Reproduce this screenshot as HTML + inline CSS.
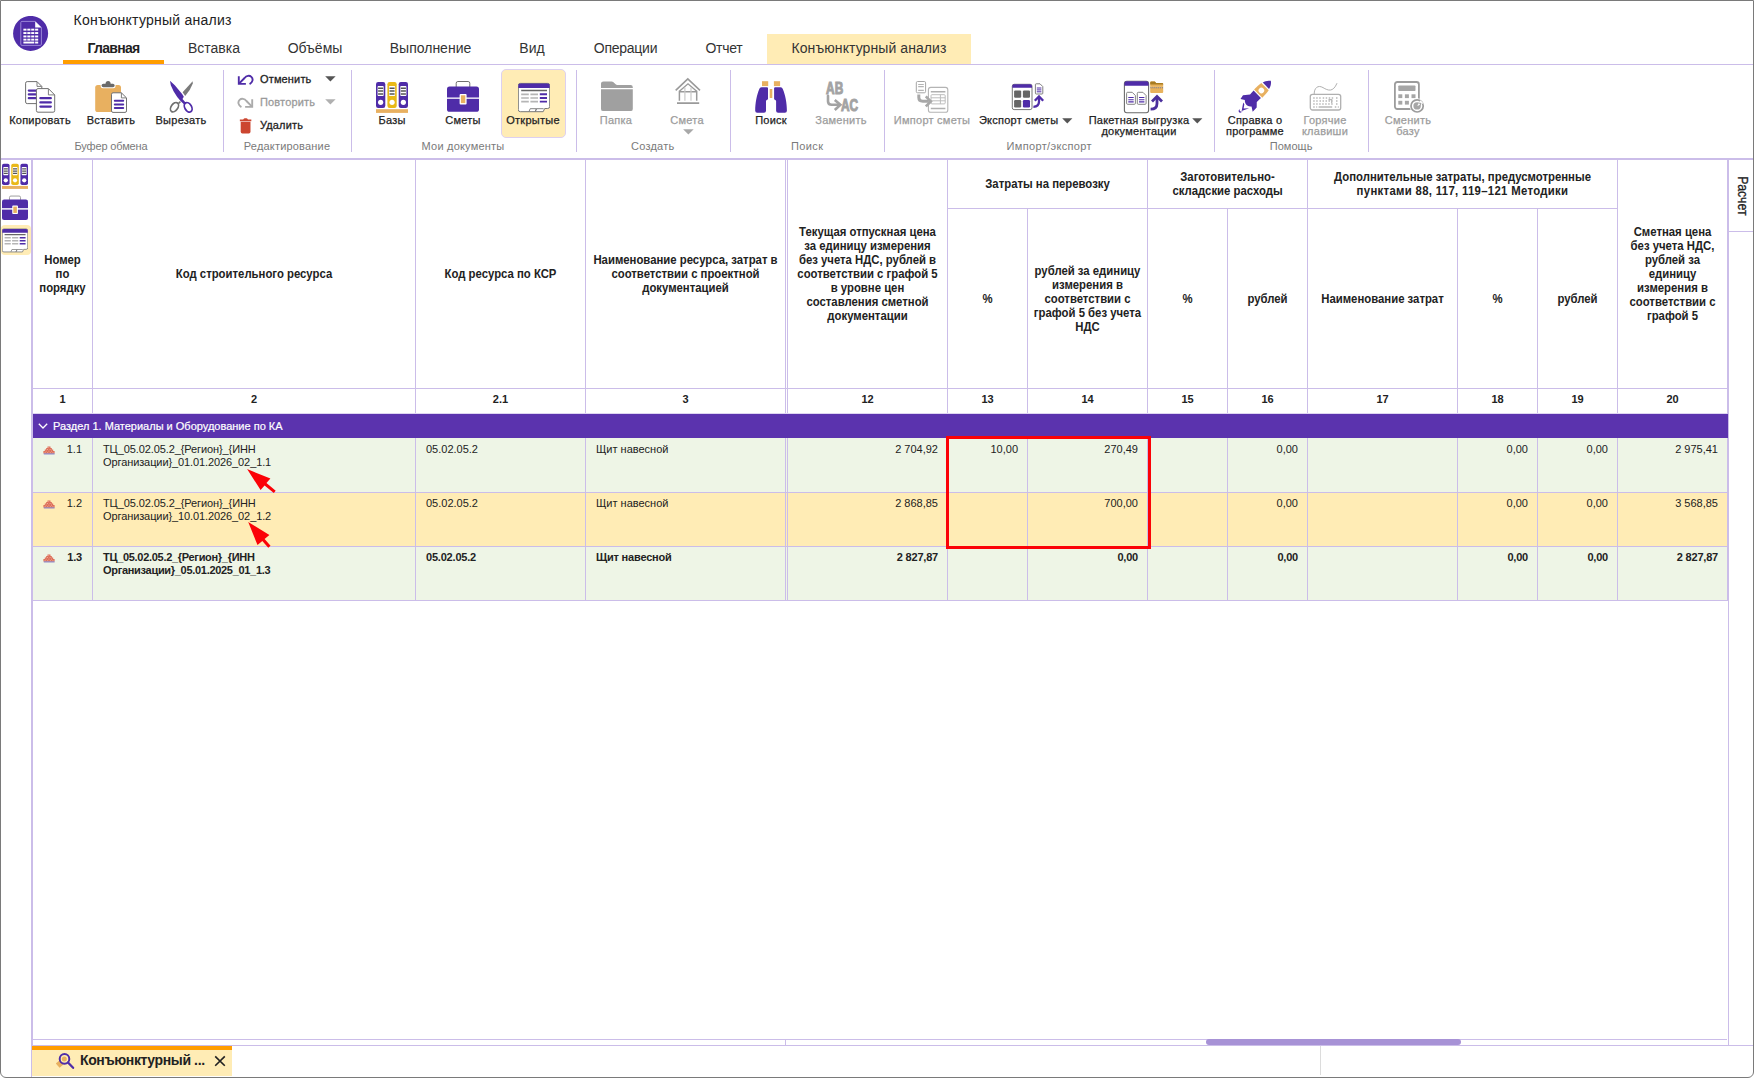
<!DOCTYPE html>
<html lang="ru">
<head>
<meta charset="utf-8">
<title>Конъюнктурный анализ</title>
<style>
*{box-sizing:border-box;margin:0;padding:0}
html,body{width:1754px;height:1078px;overflow:hidden;background:#fff}
body{font-family:"Liberation Sans",sans-serif;color:#222;position:relative;font-size:11px}
.abs{position:absolute}
#win{position:absolute;left:0;top:0;width:1754px;height:1078px;border:1px solid #7a7a7a;border-radius:0 0 6px 6px;overflow:hidden;background:#fff}
/* everything inside #frame is positioned in page coordinates */
#frame{position:absolute;left:-1px;top:-1px;width:1754px;height:1078px}
.ln{position:absolute;background:#cbbde9}
/* title */
#title{left:73.5px;top:11px;font-size:14px;line-height:18px;color:#222;white-space:nowrap;letter-spacing:.24px}
.tab{position:absolute;top:34px;height:30px;font-size:14px;line-height:28px;text-align:center;color:#333;white-space:nowrap}
.tab.act{font-weight:bold;color:#222;letter-spacing:-.7px}
.tab.ka{background:#ffecb5}
/* ribbon */
.sep{position:absolute;top:70px;height:82px;width:1px;background:#cbbde9}
.gl{position:absolute;top:140px;height:13px;line-height:13px;font-size:11px;color:#7a7a7a;text-align:center;white-space:nowrap;transform:translateX(-50%);letter-spacing:.15px}
.lb{position:absolute;text-align:center;white-space:nowrap;transform:translateX(-50%);font-size:11px;line-height:11px;color:#222;letter-spacing:.25px;-webkit-text-stroke:.25px}
.lb.dis{color:#9c9c9c}
.sb{position:absolute;left:237px;height:18px;line-height:18px;font-size:11px;font-weight:normal;-webkit-text-stroke:.28px;white-space:nowrap;color:#222;letter-spacing:.15px}
.sb.dis{color:#9a9a9a}
.sb svg{position:absolute;left:0;top:2px;width:17px;height:16px}
.sb span{position:absolute;left:23px;top:0}
.dd{display:inline-block;width:0;height:0;border-left:5px solid transparent;border-right:5px solid transparent;border-top:5px solid #555;vertical-align:middle;margin-left:3px;position:relative;top:-1px}
.dd.dis{border-top-color:#aaa}
/* table */
.hc{position:absolute;transform:scaleX(.945);display:flex;align-items:center;justify-content:center;text-align:center;font-weight:bold;font-size:12px;line-height:14px;color:#222}
.nc{position:absolute;top:388px;height:24px;line-height:22px;text-align:center;font-weight:bold;font-size:11px;color:#222}
.row{position:absolute;left:33px;width:1694px;height:54px}
.g{background:#eef5e6}
.y{background:#ffecb5}
.c{position:absolute;font-size:11px;line-height:13px;white-space:nowrap;color:#222}
.r{text-align:right}
.b{font-weight:bold;letter-spacing:-.2px}
</style>
</head>
<body>
<div id="win"><div id="frame">

<!-- TITLE BAR -->
<svg class="abs" style="left:13px;top:16px" width="36" height="36" viewBox="0 0 36 36">
  <circle cx="17.6" cy="17.4" r="17.5" fill="#4f2ca8"/>
  <path d="M9 5.400h13.200l6.200 6.200v16.600a1.200 1.200 0 0 1-1.200 1.200H9a1.200 1.200 0 0 1-1.200-1.200V6.600A1.200 1.200 0 0 1 9 5.400z" fill="#4f2ca8" stroke="#9a86d6" stroke-width="1"/>
  <path d="M22.200 5.400l6.200 6.200h-6.200z" fill="#fff"/>
  <g fill="#fff">
<rect x="10.4" y="12.7" width="3.100" height="1.900"/><rect x="14.3" y="12.7" width="3.100" height="1.900"/><rect x="18.2" y="12.7" width="3.100" height="1.900"/><rect x="22.1" y="12.7" width="3.100" height="1.900"/><rect x="10.4" y="16.1" width="3.100" height="1.900"/><rect x="14.3" y="16.1" width="3.100" height="1.900"/><rect x="18.2" y="16.1" width="3.100" height="1.900"/><rect x="22.1" y="16.1" width="3.100" height="1.900"/><rect x="10.4" y="19.5" width="3.100" height="1.900"/><rect x="14.3" y="19.5" width="3.100" height="1.900"/><rect x="18.2" y="19.5" width="3.100" height="1.900"/><rect x="22.1" y="19.5" width="3.100" height="1.900"/><rect x="10.4" y="22.7" width="3.100" height="1.900"/><rect x="14.3" y="22.7" width="3.100" height="1.900"/><rect x="18.2" y="22.7" width="3.100" height="1.900"/><rect x="22.1" y="22.7" width="3.100" height="1.900"/><rect x="10.4" y="25.6" width="10.900" height="1.900"/><rect x="22.100" y="25.6" width="3.100" height="1.900"/>
  </g>
</svg>
<div id="title" class="abs">Конъюнктурный анализ</div>

<div class="tab act" style="left:63px;width:101px">Главная</div>
<div class="tab" style="left:164px;width:100px">Вставка</div>
<div class="tab" style="left:264px;width:102px">Объёмы</div>
<div class="tab" style="left:366px;width:129px">Выполнение</div>
<div class="tab" style="left:495px;width:74px">Вид</div>
<div class="tab" style="left:569px;width:113px;letter-spacing:-.25px">Операции</div>
<div class="tab" style="left:682px;width:84px;letter-spacing:-.25px">Отчет</div>
<div class="tab ka" style="left:767px;width:204px;letter-spacing:.08px">Конъюнктурный анализ</div>
<div class="abs" style="left:63px;top:60px;width:101px;height:4px;background:#ff9d00"></div>
<div class="ln" style="left:1px;top:64px;width:1752px;height:1px"></div>

<!-- RIBBON -->
<!--RIBBON-->
<div class="sep" style="left:223px"></div>
<div class="sep" style="left:351px"></div>
<div class="sep" style="left:576px"></div>
<div class="sep" style="left:730px"></div>
<div class="sep" style="left:884px"></div>
<div class="sep" style="left:1214px"></div>
<div class="sep" style="left:1368px"></div>
<svg class="abs" style="left:24px;top:81px" width="32" height="32" viewBox="0 0 32 32">
<path d="M3.2 .6h9.8l4.8 4.8v15.6a1.6 1.6 0 0 1-1.6 1.6H3.2a1.6 1.6 0 0 1-1.6-1.6V2.2A1.6 1.6 0 0 1 3.2 .6z" fill="#fff" stroke="#707070"/>
<path d="M13 .8v4.6h4.6" fill="none" stroke="#707070" stroke-width=".9"/>
<g stroke="#4f2ca8" stroke-width="2.200" stroke-linecap="round"><path d="M4.800 9.600h8M4.800 13.400h8M4.800 17.200h8"/></g>
<path d="M14 7.6h10.4l6.3 6.3v15.7a1.6 1.6 0 0 1-1.6 1.6H14a1.6 1.6 0 0 1-1.6-1.6V9.2A1.6 1.6 0 0 1 14 7.6z" fill="#fff" stroke="#707070"/>
<path d="M24.4 7.8v6.1h6.1" fill="none" stroke="#707070" stroke-width=".9"/>
<g stroke="#4f2ca8" stroke-width="2.3" stroke-linecap="round"><path d="M16.4 17.2h10.4M16.4 21.4h10.4M16.4 25.6h10.4"/></g>
</svg>
<div class="lb" style="left:40px;top:115px">Копировать</div>
<svg class="abs" style="left:95px;top:81px" width="33" height="32" viewBox="0 0 33 32">
<rect x="0.2" y="3.9" width="25.8" height="27.2" rx="2.6" fill="#e8b060"/>
<rect x="5.600" y="2" width="15" height="5.200" rx="2.300" fill="#fff"/><circle cx="13.100" cy="2.500" r="2.500" fill="#6a6a6a"/><rect x="6.600" y="2.700" width="13" height="3.500" rx="1.700" fill="#6a6a6a"/>
<path d="M18 11.800h8.400l5.100 5.100v13a1.500 1.500 0 0 1-1.500 1.500H18a1.500 1.500 0 0 1-1.500-1.500V13.300a1.500 1.500 0 0 1 1.500-1.500z" fill="#fff" stroke="#707070"/>
<path d="M26.400 12v4.900h4.900" fill="none" stroke="#707070" stroke-width=".9"/>
<g stroke="#4f2ca8" stroke-width="2" stroke-linecap="round"><path d="M19.800 19.700h8.400M19.800 23.400h8.400M19.800 27.100h8.400"/></g>
</svg>
<div class="lb" style="left:111px;top:115px">Вставить</div>
<svg class="abs" style="left:166px;top:81px" width="32" height="33" viewBox="0 0 32 33">
<path d="M26.650 .200L16.600 11.300 19.200 15 23.700 9.100 26.800 2.400z" fill="#7a7a7a"/>
<path d="M12.200 21.600L14 20.100 14.900 21.200 13.100 22.900z" fill="#707070"/>
<ellipse cx="8.500" cy="26.200" rx="3.300" ry="5.200" transform="rotate(35 8.500 26.200)" fill="none" stroke="#707070" stroke-width="1.700"/>
<path d="M4 -.200L8.800 4.300 16.300 13.200 17.800 15.800 16.500 18 19.800 21.800 17.900 23.300 14.800 20.200 11.400 16.200 7.700 10.600 4.800 4.300z" fill="#4f2ca8"/>
<ellipse cx="22.200" cy="26.300" rx="3.400" ry="5.100" transform="rotate(-30 22.200 26.300)" fill="none" stroke="#4f2ca8" stroke-width="1.800"/>
</svg>
<div class="lb" style="left:181px;top:115px">Вырезать</div>
<div class="gl" style="left:111px;letter-spacing:-0.15px">Буфер обмена</div>
<div class="sb" style="top:70px"><svg width="18" height="13" viewBox="0 0 18 13"><g fill="none" stroke="#4f2ca8" stroke-width="2"><path d="M1.900 2.400v8.200h7.500"/><path d="M2.400 10.100 8 4.400C10 1.900 13.200 1.300 15.200 3.200c2.300 2.200 1.500 5.800-1.900 7.600"/></g></svg><span>Отменить</span></div>
<svg class="abs" style="left:325px;top:76px" width="11" height="6" viewBox="0 0 11 6"><path d="M.2 .2h10.400L5.400 5.600z" fill="#555"/></svg>
<div class="sb dis" style="top:93px"><svg width="18" height="13" viewBox="0 0 18 13"><g fill="none" stroke="#ababab" stroke-width="2" transform="translate(18 0) scale(-1 1)"><path d="M1.900 2.400v8.200h7.500"/><path d="M2.400 10.100 8 4.400C10 1.900 13.200 1.300 15.200 3.200c2.300 2.200 1.500 5.800-1.900 7.600"/></g></svg><span>Повторить</span></div>
<svg class="abs" style="left:325px;top:99px" width="11" height="6" viewBox="0 0 11 6"><path d="M.2 .2h10.400L5.400 5.600z" fill="#b0b0b0"/></svg>
<div class="sb" style="top:116px"><svg width="18" height="17" viewBox="0 0 18 17"><path d="M3 1.600h3.600c.3-1.100 1.200-1.400 2.500-1.400s2.200.3 2.500 1.400h3.600v1.800H3z" fill="#cc4630"/><path d="M3.900 4.100h10.400v10.500a1.800 1.800 0 0 1-1.800 1.800H5.700a1.800 1.800 0 0 1-1.800-1.800z" fill="#cc4630"/></svg><span>Удалить</span></div>
<div class="gl" style="left:287px;letter-spacing:0.19px">Редактирование</div>
<svg class="abs" style="left:376px;top:81px" width="32" height="32" viewBox="0 0 32 32"><rect x="0" y="1" width="9.300" height="26" rx="2.200" fill="#4f2ca8"/><rect x="1.6" y="4.900" width="6.100" height="10.200" rx=".8" fill="#fff"/><g stroke="#555" stroke-width="1.500"><path d="M2.1 7.300h5.100M2.1 10.100h5.100M2.1 12.900h5.100"/></g><circle cx="4.65" cy="21.300" r="2.600" fill="#fff"/><rect x="11.4" y="1" width="9.300" height="26" rx="2.200" fill="#e9b917"/><rect x="13.0" y="4.900" width="6.100" height="10.200" rx=".8" fill="#fff"/><g stroke="#555" stroke-width="1.500"><path d="M13.5 7.300h5.100M13.5 10.100h5.100M13.5 12.900h5.100"/></g><circle cx="16.05" cy="21.300" r="2.600" fill="#fff"/><rect x="22.7" y="1" width="9.300" height="26" rx="2.200" fill="#4f2ca8"/><rect x="24.3" y="4.900" width="6.100" height="10.200" rx=".8" fill="#fff"/><g stroke="#555" stroke-width="1.500"><path d="M24.8 7.300h5.100M24.8 10.100h5.100M24.8 12.900h5.100"/></g><circle cx="27.35" cy="21.300" r="2.600" fill="#fff"/><rect x="0" y="28.200" width="32" height="3.700" fill="#e8b060"/></svg>
<div class="lb" style="left:392px;top:115px">Базы</div>
<svg class="abs" style="left:447px;top:81px" width="32" height="32" viewBox="0 0 32 32">
<path d="M9.200 6V2.200A1.700 1.700 0 0 1 10.900 .5h10.200a1.700 1.700 0 0 1 1.700 1.700V6" fill="#fff" stroke="#707070" stroke-width="1"/>
<rect x="0" y="5.400" width="32" height="25.400" rx="2.600" fill="#4f2ca8"/>
<rect x="0" y="16.500" width="32" height="1.300" fill="#fff"/>
<rect x="12.600" y="13" width="7" height="10.400" rx="1" fill="#fff"/>
<rect x="13.900" y="14.300" width="4.400" height="7.800" fill="#e8b060"/>
</svg>
<div class="lb" style="left:463px;top:115px">Сметы</div>
<div class="abs" style="left:501px;top:69px;width:65px;height:69px;background:#ffecb5;border:1px solid #ddd0f0;border-radius:5px"></div>
<svg class="abs" style="left:518px;top:81px" width="32" height="32" viewBox="0 0 32 32">
<path d="M2.300 2.400h27.400a2 2 0 0 1 2 2v21.100a2 2 0 0 1-2 2h-3l-1.500 3.200H2.300a2 2 0 0 1-2-2V4.400a2 2 0 0 1 2-2z" fill="#fff" stroke="#777" stroke-width="1"/>
<path d="M2.300 2.400h27.400a2 2 0 0 1 2 2v2.600H.3V4.400a2 2 0 0 1 2-2z" fill="#4f2ca8"/>
<path d="M3.200 9.400h25.800" stroke="#666" stroke-width="1.500"/>
<g stroke="#b5b5b5" stroke-width="1.700"><path d="M3.200 13.300h7.600M12.400 13.300h7.600M3.200 17h7.600M12.400 17h7.600M3.200 20.600h7.600M12.400 20.600h7.600"/></g>
<g stroke="#4f2ca8" stroke-width="1.900"><path d="M21.800 13.300h7.200M21.800 17h7.200M21.800 20.600h7.200"/></g>
<path d="M11 30.500l1.200-2.800h6.200l-1.200 2.800M17.400 30.500l1.200-2.800h7" fill="none" stroke="#777" stroke-width=".9"/>
</svg>
<div class="lb" style="left:533px;top:115px">Открытые</div>
<div class="gl" style="left:463px;letter-spacing:0.2px">Мои документы</div>
<svg class="abs" style="left:600px;top:81px" width="34" height="32" viewBox="0 0 34 32"><path d="M1 3.200A2.600 2.600 0 0 1 3.600 .400h8c2.600 0 3.400 3.600 6.400 3.600h12.600a2.200 2.200 0 0 1 2.200 2.200v.800H1z" fill="#a0a0a0"/><path d="M1 8.300h31.800v19.600a2.200 2.200 0 0 1-2.200 2.200H3.200A2.200 2.200 0 0 1 1 27.900z" fill="#a0a0a0"/></svg>
<div class="lb dis" style="left:616px;top:115px">Папка</div>
<svg class="abs" style="left:672px;top:75px" width="32" height="32" viewBox="0 0 32 32">
<g fill="none" stroke="#9a9a9a"><path d="M3.700 15.300 15.800 3.900 28 15.300" stroke-width="1.600"/><path d="M7.400 16.200 16 8.800l8.700 7.400" stroke-width="1.400"/>
<path d="M7.400 15.800v10M24.700 15.800v10" stroke-width="1.500"/><path d="M7.400 16.700h17.300" stroke-width="1.400"/>
<path d="M12.900 12.400v13.400M19 12.400v13.400" stroke="#c9c9c9" stroke-width="1.200"/></g>
<path d="M5 28.100h22.200" stroke="#9a9a9a" stroke-width="1.700"/>
</svg>
<div class="lb dis" style="left:687px;top:115px">Смета</div>
<svg class="abs" style="left:683px;top:129px" width="11" height="6" viewBox="0 0 11 6"><path d="M.1 .2h10.600L5.400 5.400z" fill="#a8a8a8"/></svg>
<div class="gl" style="left:652.7px;letter-spacing:0.21px">Создать</div>
<svg class="abs" style="left:755px;top:81px" width="33" height="32" viewBox="0 0 33 32">
<rect x="7" y=".2" width="6.200" height="4.900" fill="#e8b060"/><rect x="18.900" y=".2" width="6.200" height="4.900" fill="#e8b060"/>
<rect x="14.700" y="8" width="2.600" height="8.900" rx=".5" fill="#e8b060"/>
<path d="M6.600 6.200h5.400a1 1 0 0 1 1 1v10.300c0 1-.5 1.200-1.100 1.400s-.9.500-.9 1.300v9.500a2 2 0 0 1-2 2H2.200a2 2 0 0 1-2-2c0-7.400 1.600-15.800 4-21.400.5-1.200 1.100-2.100 2.400-2.100z" fill="#4f2ca8"/>
<path d="M25.500 6.200h-5.400a1 1 0 0 0-1 1v10.300c0 1 .5 1.200 1.100 1.400s.9.500.9 1.300v9.500a2 2 0 0 0 2 2h6.800a2 2 0 0 0 2-2c0-7.400-1.600-15.800-4-21.400-.5-1.200-1.100-2.100-2.400-2.100z" fill="#4f2ca8"/>
</svg>
<div class="lb" style="left:771px;top:115px">Поиск</div>
<svg class="abs" style="left:824px;top:81px" width="36" height="32" viewBox="0 0 36 32">
<g style="font-family:'Liberation Sans',sans-serif;font-weight:bold;font-size:17.200px" fill="#a3a3a3" stroke="#a3a3a3" stroke-width="1.100"><text transform="translate(2.100 12.800) scale(.69 1)">AB</text><text transform="translate(16.900 29.800) scale(.69 1)">AC</text></g>
<path d="M4 14.800v5.400c0 2.600 1.300 3.600 3.800 3.600h7" fill="none" stroke="#a3a3a3" stroke-width="2.600" stroke-linecap="round"/><path d="M10.800 19l5.600 4.800-5.600 5.200" fill="none" stroke="#a3a3a3" stroke-width="2.600"/>
</svg>
<div class="lb dis" style="left:841px;top:115px">Заменить</div>
<div class="gl" style="left:807.2px;letter-spacing:0.38px">Поиск</div>
<svg class="abs" style="left:915px;top:81px" width="34" height="32" viewBox="0 0 34 32">
<rect x="1.300" y=".500" width="9.300" height="11.300" rx="1.300" fill="#fff" stroke="#a6a6a6"/><g stroke="#b4b4b4" stroke-width="1.200"><path d="M3.200 3.500h5.600M3.200 5.700h5.600M3.200 9.300h5.600"/></g>
<rect x="13.400" y="6.400" width="19.400" height="24.900" rx="2.400" fill="#fff" stroke="#b4b4b4" stroke-width="1.100"/>
<g stroke="#b0b0b0" stroke-width="1.400" fill="none"><path d="M15.800 10.800h14.600M15.800 27.500h14.600"/></g>
<g stroke="#bdbdbd" stroke-width="1" fill="none"><rect x="16" y="13.700" width="14.200" height="9.200" rx="1"/><path d="M16 16.800h14.200M16 19.800h14.200M25.400 13.700v9.200"/></g>
<path d="M3.800 13.400v3.200c0 2.600 1.400 3.700 4 3.700h5.600" fill="none" stroke="#a8a8a8" stroke-width="3"/><path d="M10.800 15.400l5 5-5 5" fill="none" stroke="#a8a8a8" stroke-width="2.700"/>
</svg>
<div class="lb dis" style="left:932px;top:115px">Импорт сметы</div>
<svg class="abs" style="left:1011px;top:81px" width="34" height="32" viewBox="0 0 34 32">
<rect x="1.300" y="3.300" width="19.700" height="25.300" rx="1.800" fill="#fff" stroke="#777"/>
<path d="M3.100 3.300h16.100a1.800 1.800 0 0 1 1.800 1.800v1.600H1.300V5.100a1.800 1.800 0 0 1 1.800-1.800z" fill="#4f2ca8"/>
<rect x="3.100" y="9.400" width="7.100" height="7.300" rx="1.200" fill="#666"/><rect x="11.900" y="9.400" width="7.100" height="7.300" rx="1.200" fill="#666"/><rect x="3.100" y="19.100" width="7.100" height="7.300" rx="1.200" fill="#666"/><rect x="11.900" y="19.100" width="7.100" height="7.300" rx="1.200" fill="#4f2ca8"/>
<path d="M25.200 2.800h3.800l2.800 2.800v6.600a.8 .8 0 0 1-.8 .8h-5.800a.8 .8 0 0 1-.8-.8V3.600a.8 .8 0 0 1 .8-.8z" fill="#fff" stroke="#707070" stroke-width=".9"/>
<g stroke="#4f2ca8" stroke-width="1"><path d="M25.800 7h4.600M25.800 8.900h4.600M25.800 10.800h4.600"/></g>
<path d="M22.400 25.800c3.600 0 5.600-1.600 5.600-5.200v-4.200" fill="none" stroke="#4f2ca8" stroke-width="2.300"/><path d="M23.800 19.700l4.200-4.300 4.200 4.300" fill="none" stroke="#4f2ca8" stroke-width="2.300"/>
</svg>
<div class="lb" style="left:1018.6px;top:115px">Экспорт сметы</div>
<svg class="abs" style="left:1062px;top:118px" width="11" height="6" viewBox="0 0 11 6"><path d="M.2 .2h10.200L5.300 5.400z" fill="#555"/></svg>
<svg class="abs" style="left:1123px;top:80px" width="42" height="34" viewBox="0 0 42 34">
<rect x="1.400" y="1.300" width="24.200" height="31.400" rx="2.400" fill="#fff" stroke="#6a6a6a" stroke-width="1.100"/>
<path d="M3.800 1.300h19.400a2.400 2.400 0 0 1 2.400 2.400v2.100H1.400V3.700a2.400 2.400 0 0 1 2.400-2.400z" fill="#4f2ca8"/>
<path d="M4.6 12.3h4.600l3.200 3.200v7.800a1 1 0 0 1-1 1H4.6a1 1 0 0 1-1-1V13.3a1 1 0 0 1 1-1z" fill="#fff" stroke="#777" stroke-width=".9"/><g stroke="#4f2ca8" stroke-width="1.100"><path d="M5.3 17.5h5.400M5.3 19.700000000000003h5.400M5.3 21.9h5.400"/></g><path d="M15.3 12.3h4.600l3.200 3.200v7.800a1 1 0 0 1-1 1H15.3a1 1 0 0 1-1-1V13.3a1 1 0 0 1 1-1z" fill="#fff" stroke="#777" stroke-width=".9"/><g stroke="#4f2ca8" stroke-width="1.100"><path d="M16.0 17.5h5.400M16.0 19.700000000000003h5.400M16.0 21.9h5.400"/></g>
<path d="M27.200 2.600a1 1 0 0 1 1-1h3.600l1.400 1.400h6a1 1 0 0 1 1 1v8a1 1 0 0 1-1 1H28.200a1 1 0 0 1-1-1z" fill="#e8b25c"/><path d="M27.200 2.600a1 1 0 0 1 1-1h3.600l1.400 1.400h6a1 1 0 0 1 1 1v.6h-13z" fill="#a87c22"/><path d="M27.600 7.600h12.400" stroke="#6d6d80" stroke-width="1.300" stroke-dasharray="1 .9"/><path d="M27.800 7h12" stroke="#f4e3c0" stroke-width=".7" stroke-dasharray="1 .9"/>
<path d="M27.600 29.200c4.400 0 6.400-1.800 6.400-5.800v-5.600" fill="none" stroke="#4a2f9c" stroke-width="2.800"/><path d="M29 21.600l5-5 5 5" fill="none" stroke="#4a2f9c" stroke-width="2.800"/>
</svg>
<div class="lb" style="left:1139px;top:115px">Пакетная выгрузка<br>документации</div>
<svg class="abs" style="left:1192px;top:118px" width="11" height="6" viewBox="0 0 11 6"><path d="M.2 .2h10.200L5.300 5.400z" fill="#555"/></svg>
<div class="gl" style="left:1049.2px;letter-spacing:0.35px">Импорт/экспорт</div>
<svg class="abs" style="left:1238px;top:80px" width="34" height="34" viewBox="0 0 34 34">
<g transform="translate(17 16.700) rotate(45)">
<path d="M0 -22.400C2.600 -20.600 4 -18.200 4.500 -15.300L-4.500 -15.500C-4 -18.200 -2.600 -20.600 0 -22.400z" fill="#4f2ca8"/>
<path d="M-5.300 -14.200L5.200 -14.200C5.700 -11 5.900 -8 5.850 -4.500L-5.850 -4.500C-5.900 -8 -5.700 -11 -5.300 -14.200z" fill="#e8b060"/>
<circle cx=".1" cy="-8.900" r="2.800" fill="#fff"/>
<path d="M-5.300 -3.300L5.200 -3.200 5 2.500 8.900 6.500 9 12.300 4.400 9.300C3.500 11 1.500 11.900 0 11.900-1.500 11.900-3.200 11.300-4.800 9.600L-8.600 11.900-9.600 7.400-5 2z" fill="#4f2ca8"/>
<path d="M-4.200 12.400L-2.200 12.900 .3 16.400 3.900 12.300 .6 19.500z" fill="#4f2ca8"/>
<path d="M-2.300 19.800C-1 21 .5 21.200 1.900 19.200 1.700 21.400 .6 22.600 -.6 22.200-1.600 21.800-2.200 20.900-2.300 19.800z" fill="#4f2ca8"/>
</g></svg>
<div class="lb" style="left:1255px;top:115px">Справка о<br>программе</div>
<svg class="abs" style="left:1309px;top:81px" width="34" height="32" viewBox="0 0 34 32">
<path d="M5.200 13.200C5 7 9 3.600 14 6.600S24 11.600 28 2.200" fill="none" stroke="#b0b0b0" stroke-width="1"/>
<rect x="1.300" y="13.400" width="30.400" height="15.600" rx="2.200" fill="#fff" stroke="#b0b0b0" stroke-width="1.300"/>
<g stroke="#b8b8b8" stroke-width="1.500" stroke-dasharray="1.500 1.500"><path d="M4.200 17h8M13.700 17h10.600M27 17h2.600M4.200 20h5M10.500 20h13M27 20h2.600M4.200 23h20M27 23h2.600M4.200 26h4"/><path d="M25.800 26h4" /></g>
<path d="M9.600 26h13.600" stroke="#b8b8b8" stroke-width="1.500"/><path d="M19.500 18.600h3.200v3.600" fill="none" stroke="#b8b8b8" stroke-width="1.300"/>
</svg>
<div class="lb dis" style="left:1325px;top:115px">Горячие<br>клавиши</div>
<div class="gl" style="left:1291.1px;letter-spacing:0.05px">Помощь</div>
<svg class="abs" style="left:1393px;top:81px" width="34" height="32" viewBox="0 0 34 32">
<rect x="1.900" y="1" width="24" height="27" rx="2.400" fill="#fff" stroke="#9c9c9c" stroke-width="1.800"/>
<rect x="5.300" y="4.500" width="17.200" height="5.600" rx=".8" fill="#a6a6a6"/>
<g fill="#a6a6a6"><rect x="5.300" y="13.300" width="4" height="3.800"/><rect x="11.900" y="13.300" width="4" height="3.800"/><rect x="18.500" y="13.300" width="4" height="3.800"/><rect x="5.300" y="19.800" width="4" height="3.800"/><rect x="11.900" y="19.800" width="4" height="3.800"/></g>
<circle cx="24.100" cy="24.900" r="7.600" fill="#fff"/><circle cx="24.100" cy="24.900" r="6.100" fill="none" stroke="#9c9c9c" stroke-width="1.700"/><circle cx="24.100" cy="24.900" r="3.700" fill="#a6a6a6"/><path d="M24.100 24.900L30.400 22.200 27.600 19.200z" fill="#fff"/><path d="M25.600 21.600l2.800 .4-.6 2.800z" fill="#a6a6a6"/>
</svg>
<div class="lb dis" style="left:1408px;top:115px">Сменить<br>базу</div>
<!--/RIBBON-->

<!-- table frame lines -->
<div class="ln" style="left:1px;top:158px;width:1752px;height:2px"></div>

<!-- SIDEBAR -->
<!--SIDE-->
<div class="abs" style="left:1px;top:225px;width:30px;height:30px;background:#ffecb5;border-radius:4px"></div>
<svg class="abs" style="left:2px;top:163px" width="26" height="26" viewBox="0 0 32 32"><rect x="0" y="1" width="9.300" height="26" rx="2.200" fill="#4f2ca8"/><rect x="1.6" y="4.900" width="6.100" height="10.200" rx=".8" fill="#fff"/><g stroke="#555" stroke-width="1.500"><path d="M2.1 7.300h5.100M2.1 10.100h5.100M2.1 12.900h5.100"/></g><circle cx="4.65" cy="21.300" r="2.600" fill="#fff"/><rect x="11.4" y="1" width="9.300" height="26" rx="2.200" fill="#e9b917"/><rect x="13.0" y="4.900" width="6.100" height="10.200" rx=".8" fill="#fff"/><g stroke="#555" stroke-width="1.500"><path d="M13.5 7.300h5.100M13.5 10.100h5.100M13.5 12.900h5.100"/></g><circle cx="16.05" cy="21.300" r="2.600" fill="#fff"/><rect x="22.7" y="1" width="9.300" height="26" rx="2.200" fill="#4f2ca8"/><rect x="24.3" y="4.900" width="6.100" height="10.200" rx=".8" fill="#fff"/><g stroke="#555" stroke-width="1.500"><path d="M24.8 7.300h5.100M24.8 10.100h5.100M24.8 12.900h5.100"/></g><circle cx="27.35" cy="21.300" r="2.600" fill="#fff"/><rect x="0" y="28.200" width="32" height="3.700" fill="#e8b060"/></svg>
<svg class="abs" style="left:2px;top:195px" width="26" height="26" viewBox="0 0 32 32"><path d="M9.200 6V3a1.700 1.700 0 0 1 1.700-1.700h10.200A1.700 1.700 0 0 1 22.800 3v3" fill="#fff" stroke="#8a8a8a" stroke-width="1"/>
<rect x="0" y="5.400" width="32" height="25.400" rx="2.600" fill="#4f2ca8"/>
<rect x="0" y="16.200" width="32" height="1.800" fill="#fff"/>
<rect x="12.600" y="13" width="7" height="10.400" rx="1" fill="#fff"/>
<rect x="13.900" y="14.300" width="4.400" height="7.800" fill="#e8b060"/></svg>
<svg class="abs" style="left:2px;top:227px" width="26" height="26" viewBox="0 0 32 32"><path d="M2.300 2.400h27.400a2 2 0 0 1 2 2v21.100a2 2 0 0 1-2 2h-3l-1.500 3.200H2.300a2 2 0 0 1-2-2V4.400a2 2 0 0 1 2-2z" fill="#fff" stroke="#777" stroke-width="1"/>
<path d="M2.300 2.400h27.400a2 2 0 0 1 2 2v2.600H.3V4.400a2 2 0 0 1 2-2z" fill="#4f2ca8"/>
<path d="M3.200 9.400h25.800" stroke="#666" stroke-width="1.500"/>
<g stroke="#b5b5b5" stroke-width="1.700"><path d="M3.200 13.300h7.600M12.400 13.300h7.600M3.200 17h7.600M12.400 17h7.600M3.200 20.600h7.600M12.400 20.600h7.600"/></g>
<g stroke="#4f2ca8" stroke-width="1.900"><path d="M21.800 13.300h7.200M21.800 17h7.200M21.800 20.600h7.200"/></g>
<path d="M11 30.500l1.200-2.800h6.200l-1.200 2.800M17.400 30.500l1.200-2.800h7" fill="none" stroke="#777" stroke-width=".9"/></svg>
<!--/SIDE-->

<!-- TABLE -->
<!--TABLE-->
<div class="ln" style="left:31px;top:160px;width:1px;height:917px"></div>
<div class="ln" style="left:32px;top:160px;width:1px;height:886px"></div>
<div class="ln" style="left:1728px;top:160px;width:1px;height:886px"></div>
<div class="ln" style="left:1727px;top:160px;width:1px;height:254px"></div>
<div class="ln" style="left:1727px;top:438px;width:1px;height:163px"></div>
<div class="abs" style="left:33px;top:414px;width:1695px;height:24px;background:#5b33ae"></div>
<div class="row g" style="top:438px"></div>
<div class="row y" style="top:492px"></div>
<div class="row g" style="top:546px"></div>
<div class="ln" style="left:92px;top:160px;width:1px;height:253px"></div>
<div class="ln" style="left:92px;top:438px;width:1px;height:162px"></div>
<div class="ln" style="left:415px;top:160px;width:1px;height:253px"></div>
<div class="ln" style="left:415px;top:438px;width:1px;height:162px"></div>
<div class="ln" style="left:585px;top:160px;width:1px;height:253px"></div>
<div class="ln" style="left:585px;top:438px;width:1px;height:162px"></div>
<div class="ln" style="left:785px;top:160px;width:1px;height:253px"></div>
<div class="ln" style="left:785px;top:438px;width:1px;height:162px"></div>
<div class="ln" style="left:787px;top:160px;width:1px;height:253px"></div>
<div class="ln" style="left:787px;top:438px;width:1px;height:162px"></div>
<div class="ln" style="left:947px;top:160px;width:1px;height:253px"></div>
<div class="ln" style="left:947px;top:438px;width:1px;height:162px"></div>
<div class="ln" style="left:1147px;top:160px;width:1px;height:253px"></div>
<div class="ln" style="left:1147px;top:438px;width:1px;height:162px"></div>
<div class="ln" style="left:1307px;top:160px;width:1px;height:253px"></div>
<div class="ln" style="left:1307px;top:438px;width:1px;height:162px"></div>
<div class="ln" style="left:1617px;top:160px;width:1px;height:253px"></div>
<div class="ln" style="left:1617px;top:438px;width:1px;height:162px"></div>
<div class="ln" style="left:1027px;top:209px;width:1px;height:204px"></div>
<div class="ln" style="left:1027px;top:438px;width:1px;height:162px"></div>
<div class="ln" style="left:1227px;top:209px;width:1px;height:204px"></div>
<div class="ln" style="left:1227px;top:438px;width:1px;height:162px"></div>
<div class="ln" style="left:1457px;top:209px;width:1px;height:204px"></div>
<div class="ln" style="left:1457px;top:438px;width:1px;height:162px"></div>
<div class="ln" style="left:1537px;top:209px;width:1px;height:204px"></div>
<div class="ln" style="left:1537px;top:438px;width:1px;height:162px"></div>
<div class="ln" style="left:947px;top:208px;width:670px;height:1px"></div>
<div class="ln" style="left:33px;top:388px;width:1694px;height:1px"></div>
<div class="ln" style="left:33px;top:413px;width:1694px;height:1px;background:#ded5f1"></div>
<div class="ln" style="left:33px;top:492px;width:1694px;height:1px"></div>
<div class="ln" style="left:33px;top:546px;width:1694px;height:1px"></div>
<div class="ln" style="left:33px;top:600px;width:1694px;height:1px"></div>
<div class="hc" style="left:33px;top:160px;width:59px;height:228px"><div>Номер<br>по<br>порядку</div></div>
<div class="hc" style="left:93px;top:160px;width:322px;height:228px"><div>Код строительного ресурса</div></div>
<div class="hc" style="left:416px;top:160px;width:169px;height:228px"><div>Код ресурса по КСР</div></div>
<div class="hc" style="left:586px;top:160px;width:199px;height:228px"><div>Наименование ресурса, затрат в<br>соответствии с проектной<br>документацией</div></div>
<div class="hc" style="left:788px;top:160px;width:159px;height:228px"><div>Текущая отпускная цена<br>за единицу измерения<br>без учета НДС, рублей в<br>соответствии с графой 5<br>в уровне цен<br>составления сметной<br>документации</div></div>
<div class="hc" style="left:948px;top:160px;width:199px;height:48px"><div>Затраты на перевозку</div></div>
<div class="hc" style="left:1148px;top:160px;width:159px;height:48px"><div>Заготовительно-<br>складские расходы</div></div>
<div class="hc" style="left:1308px;top:160px;width:309px;height:48px"><div>Дополнительные затраты, предусмотренные<br><span style="letter-spacing:.34px">пунктами 88, 117, 119–121 Методики</span></div></div>
<div class="hc" style="left:948px;top:209px;width:79px;height:179px"><div>%</div></div>
<div class="hc" style="left:1028px;top:209px;width:119px;height:179px"><div>рублей за единицу<br>измерения в<br>соответствии с<br>графой 5 без учета<br>НДС</div></div>
<div class="hc" style="left:1148px;top:209px;width:79px;height:179px"><div>%</div></div>
<div class="hc" style="left:1228px;top:209px;width:79px;height:179px"><div>рублей</div></div>
<div class="hc" style="left:1308px;top:209px;width:149px;height:179px"><div>Наименование затрат</div></div>
<div class="hc" style="left:1458px;top:209px;width:79px;height:179px"><div>%</div></div>
<div class="hc" style="left:1538px;top:209px;width:79px;height:179px"><div>рублей</div></div>
<div class="hc" style="left:1618px;top:160px;width:109px;height:228px"><div>Сметная цена<br>без учета НДС,<br>рублей за<br>единицу<br>измерения в<br>соответствии с<br>графой 5</div></div>
<div class="nc" style="left:33px;width:59px">1</div>
<div class="nc" style="left:93px;width:322px">2</div>
<div class="nc" style="left:416px;width:169px">2.1</div>
<div class="nc" style="left:586px;width:199px">3</div>
<div class="nc" style="left:788px;width:159px">12</div>
<div class="nc" style="left:948px;width:79px">13</div>
<div class="nc" style="left:1028px;width:119px">14</div>
<div class="nc" style="left:1148px;width:79px">15</div>
<div class="nc" style="left:1228px;width:79px">16</div>
<div class="nc" style="left:1308px;width:149px">17</div>
<div class="nc" style="left:1458px;width:79px">18</div>
<div class="nc" style="left:1538px;width:79px">19</div>
<div class="nc" style="left:1618px;width:109px">20</div>
<svg class="abs" style="left:38px;top:422px" width="10" height="8" viewBox="0 0 10 8"><path d="M0.8 1.8L5 6L9.2 1.8" fill="none" stroke="#fff" stroke-width="1.3"/></svg>
<div class="c" style="left:53px;top:419px;color:#fff;line-height:14px;-webkit-text-stroke:.2px">Раздел 1. Материалы и Оборудование по КА</div>
<svg class="abs" style="left:43px;top:446px" width="12" height="9" viewBox="0 0 12 9"><path d="M4.500 .5h3v1.400h1.300v1.500h1.400v1.600h1.400v2.600h-11.200v-2.600h1.400v-1.600h1.400v-1.500h1.300z" fill="#dd6f58"/><g fill="#f1b5a6"><rect x="5.200" y="1.300" width="1" height=".8"/><rect x="4" y="3" width="1" height=".8"/><rect x="6.600" y="3" width="1" height=".8"/><rect x="2.600" y="4.700" width="1" height=".8"/><rect x="5.400" y="4.700" width="1" height=".8"/><rect x="8" y="4.700" width="1" height=".8"/><rect x="1.600" y="6.200" width="1" height=".7"/><rect x="4.200" y="6.200" width="1" height=".7"/><rect x="6.800" y="6.200" width="1" height=".7"/><rect x="9.400" y="6.200" width="1" height=".7"/></g><rect x=".8" y="7.400" width="10.800" height="1" fill="#7b70bf"/></svg>
<div class="c r" style="left:40px;width:42px;top:443px">1.1</div>
<div class="c" style="left:103px;top:443px;letter-spacing:-0.1px">ТЦ_05.02.05.2_{Регион}_{ИНН<br>Организации}_01.01.2026_02_1.1</div>
<div class="c" style="left:426px;top:443px">05.02.05.2</div>
<div class="c" style="left:596px;top:443px">Щит навесной</div>
<div class="c r" style="left:847px;width:91px;top:443px">2 704,92</div>
<div class="c r" style="left:927px;width:91px;top:443px">10,00</div>
<div class="c r" style="left:1047px;width:91px;top:443px">270,49</div>
<div class="c r" style="left:1207px;width:91px;top:443px">0,00</div>
<div class="c r" style="left:1437px;width:91px;top:443px">0,00</div>
<div class="c r" style="left:1517px;width:91px;top:443px">0,00</div>
<div class="c r" style="left:1627px;width:91px;top:443px">2 975,41</div>
<svg class="abs" style="left:43px;top:500px" width="12" height="9" viewBox="0 0 12 9"><path d="M4.500 .5h3v1.400h1.300v1.500h1.400v1.600h1.400v2.600h-11.200v-2.600h1.400v-1.600h1.400v-1.500h1.300z" fill="#dd6f58"/><g fill="#f1b5a6"><rect x="5.200" y="1.300" width="1" height=".8"/><rect x="4" y="3" width="1" height=".8"/><rect x="6.600" y="3" width="1" height=".8"/><rect x="2.600" y="4.700" width="1" height=".8"/><rect x="5.400" y="4.700" width="1" height=".8"/><rect x="8" y="4.700" width="1" height=".8"/><rect x="1.600" y="6.200" width="1" height=".7"/><rect x="4.200" y="6.200" width="1" height=".7"/><rect x="6.800" y="6.200" width="1" height=".7"/><rect x="9.400" y="6.200" width="1" height=".7"/></g><rect x=".8" y="7.400" width="10.800" height="1" fill="#7b70bf"/></svg>
<div class="c r" style="left:40px;width:42px;top:497px">1.2</div>
<div class="c" style="left:103px;top:497px;letter-spacing:-0.1px">ТЦ_05.02.05.2_{Регион}_{ИНН<br>Организации}_10.01.2026_02_1.2</div>
<div class="c" style="left:426px;top:497px">05.02.05.2</div>
<div class="c" style="left:596px;top:497px">Щит навесной</div>
<div class="c r" style="left:847px;width:91px;top:497px">2 868,85</div>
<div class="c r" style="left:1047px;width:91px;top:497px">700,00</div>
<div class="c r" style="left:1207px;width:91px;top:497px">0,00</div>
<div class="c r" style="left:1437px;width:91px;top:497px">0,00</div>
<div class="c r" style="left:1517px;width:91px;top:497px">0,00</div>
<div class="c r" style="left:1627px;width:91px;top:497px">3 568,85</div>
<svg class="abs" style="left:43px;top:554px" width="12" height="9" viewBox="0 0 12 9"><path d="M4.500 .5h3v1.400h1.300v1.500h1.400v1.600h1.400v2.600h-11.200v-2.600h1.400v-1.600h1.400v-1.500h1.300z" fill="#dd6f58"/><g fill="#f1b5a6"><rect x="5.200" y="1.300" width="1" height=".8"/><rect x="4" y="3" width="1" height=".8"/><rect x="6.600" y="3" width="1" height=".8"/><rect x="2.600" y="4.700" width="1" height=".8"/><rect x="5.400" y="4.700" width="1" height=".8"/><rect x="8" y="4.700" width="1" height=".8"/><rect x="1.600" y="6.200" width="1" height=".7"/><rect x="4.200" y="6.200" width="1" height=".7"/><rect x="6.800" y="6.200" width="1" height=".7"/><rect x="9.400" y="6.200" width="1" height=".7"/></g><rect x=".8" y="7.400" width="10.800" height="1" fill="#7b70bf"/></svg>
<div class="c r b" style="left:40px;width:42px;top:551px">1.3</div>
<div class="c b" style="left:103px;top:551px;letter-spacing:-0.3px">ТЦ_05.02.05.2_{Регион}_{ИНН<br>Организации}_05.01.2025_01_1.3</div>
<div class="c b" style="left:426px;top:551px">05.02.05.2</div>
<div class="c b" style="left:596px;top:551px">Щит навесной</div>
<div class="c r b" style="left:847px;width:91px;top:551px">2 827,87</div>
<div class="c r b" style="left:1047px;width:91px;top:551px">0,00</div>
<div class="c r b" style="left:1207px;width:91px;top:551px">0,00</div>
<div class="c r b" style="left:1437px;width:91px;top:551px">0,00</div>
<div class="c r b" style="left:1517px;width:91px;top:551px">0,00</div>
<div class="c r b" style="left:1627px;width:91px;top:551px">2 827,87</div>
<div class="abs" style="left:946px;top:436px;width:205px;height:113px;border:3px solid #fb0207"></div>
<svg class="abs" style="left:245px;top:468px" width="32" height="28" viewBox="0 0 32 28"><path d="M2.100 1.100L25.400 10.500 21.450 15.090 30.700 22.700 28.800 25 19.550 17.410 15.600 22Z" fill="#fb0207"/></svg>
<svg class="abs" style="left:246px;top:521px" width="32" height="28" viewBox="0 0 32 28"><path d="M2.200 1.100L23.400 13.900 18.590 17.970 24.540 24.820 22.260 26.780 16.310 19.930 11.500 24Z" fill="#fb0207"/></svg>
<div class="ln" style="left:1729px;top:231px;width:24px;height:1px"></div>
<div class="abs" style="left:1729px;top:160px;width:24px;height:71px;display:flex;align-items:center;justify-content:center"><div style="transform:translate(2px,0) rotate(90deg) scaleX(.885);font-size:14px;-webkit-text-stroke:.3px;white-space:nowrap;color:#222">Расчет</div></div>
<!--/TABLE-->

<!-- BOTTOM -->
<!--BOTTOM-->
<div class="ln" style="left:33px;top:1039px;width:1694px;height:1px"></div>
<div class="ln" style="left:31px;top:1045px;width:1722px;height:1px"></div>
<div class="ln" style="left:785px;top:1039px;width:1px;height:6px"></div>
<div class="abs" style="left:1206px;top:1039px;width:255px;height:6px;border-radius:3px;background:#a792d6"></div>
<div class="abs" style="left:1320px;top:1046px;width:1px;height:29px;background:#dcdcdc"></div>
<div class="abs" style="left:32px;top:1046px;width:200px;height:30px;background:#ffecb5"></div>
<div class="abs" style="left:32px;top:1046px;width:200px;height:4px;background:#ff9d00"></div>
<svg class="abs" style="left:55px;top:1052px" width="20" height="18" viewBox="0 0 20 18">
<path d="M.8 11.600l4.400-3.800 3.800 4.200-4.400 3.800z" fill="#e8b060"/>
<circle cx="9.500" cy="6.900" r="4.800" fill="#ffecb5" stroke="#4f2ca8" stroke-width="2"/>
<circle cx="9.300" cy="6.900" r="2.500" fill="#e8b060"/>
<path d="M13 10.500l5.100 5.300" stroke="#4f2ca8" stroke-width="2.300" stroke-linecap="round"/>
</svg>
<div class="abs" style="left:80px;top:1052px;font-size:14px;line-height:17px;font-weight:bold;color:#222;white-space:nowrap;letter-spacing:-.38px">Конъюнктурный ...</div>
<svg class="abs" style="left:214px;top:1055px" width="12" height="12" viewBox="0 0 12 12"><path d="M1.200 1.400l9.600 9.400M10.800 1.400l-9.600 9.400" stroke="#222" stroke-width="1.600"/></svg>
<!--/BOTTOM-->

</div></div>
</body>
</html>
